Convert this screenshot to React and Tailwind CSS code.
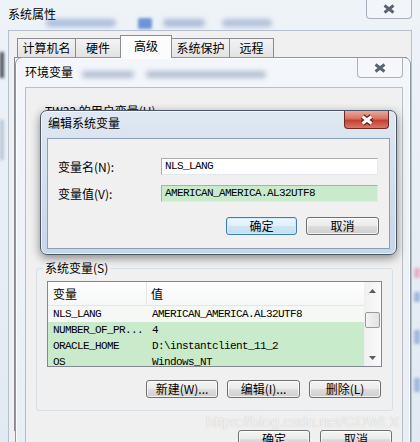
import React from "react";

const CJK = "font-['Noto_Sans_CJK_SC','Liberation_Sans',sans-serif]";
const MONO = "font-['Liberation_Mono','Noto_Sans_CJK_SC',monospace] text-[11px] tracking-[-0.6px]";

function XGlyph({ red }) {
  return (
    <svg width="16" height="12" viewBox="0 0 16 12">
      <path d="M3.5 2.5 L12.5 9.5 M12.5 2.5 L3.5 9.5" stroke={red ? "#6a1d16" : "#ffffff"} strokeWidth="5.4" strokeLinecap="butt" fill="none" />
      <path d="M3.5 2.5 L12.5 9.5 M12.5 2.5 L3.5 9.5" stroke={red ? "#ffffff" : "#5a6472"} strokeWidth="3" strokeLinecap="butt" fill="none" />
    </svg>
  );
}

function Btn({ children, className }) {
  return (
    <div
      className={
        "flex items-center justify-center h-[18px] rounded-[3px] border border-[#707070] bg-[linear-gradient(180deg,#f4f4f4_0%,#ebebeb_48%,#dddddd_52%,#cfcfcf_100%)] text-[12px] leading-[14px] text-black shadow-[inset_0_0_0_1px_rgba(255,255,255,0.7)] " +
        className
      }
    >
      {children}
    </div>
  );
}

function Tab({ children, className }) {
  return (
    <div
      className={
        "flex items-center justify-center border border-[#898c95] border-b-0 -ml-px text-[12px] leading-[14px] text-black " +
        className
      }
    >
      {children}
    </div>
  );
}

export default function App() {
  return (
    <div className={"relative w-[420px] h-[442px] overflow-hidden bg-[linear-gradient(180deg,#eef3f8,#e1e9f2)] " + CJK}>
      {/* blurred desktop behind glass */}
      <div className="absolute left-[46px] top-[19px] w-[70px] h-[8px] rounded-full bg-[#9db2d6] blur-[2.5px] opacity-80"></div>
      <div className="absolute left-[138px] top-[18px] w-[14px] h-[11px] rounded-[2px] bg-[#6f93d6] blur-[1.5px]"></div>
      <div className="absolute left-[163px] top-[19px] w-[42px] h-[8px] rounded-full bg-[#9aaed0] blur-[2.5px] opacity-80"></div>
      <div className="absolute left-[222px] top-[19px] w-[50px] h-[8px] rounded-full bg-[#a4b5d2] blur-[2.5px] opacity-80"></div>
      <div className="absolute left-0 top-[52px] w-[4px] h-[26px] bg-[#4d525b] blur-[1.5px]"></div>
      <div className="absolute left-0 top-[120px] w-[4px] h-[40px] bg-[#b9c7d8] blur-[1.5px]"></div>
      <div className="absolute left-[414px] top-[268px] w-[6px] h-[10px] bg-[#e7b1c3] blur-[1.5px]"></div>
      <div className="absolute left-[414px] top-[292px] w-[6px] h-[10px] bg-[#9fb8df] blur-[1.5px]"></div>
      <div className="absolute left-[414px] top-[330px] w-[6px] h-[14px] bg-[#9fb8df] blur-[1.5px]"></div>
      <div className="absolute left-[414px] top-[378px] w-[6px] h-[14px] bg-[#9fb8df] blur-[1.5px]"></div>

      {/* outer window title */}
      <div className="absolute left-[8px] top-[6px] text-[12px] leading-[16px] text-black">系统属性</div>
      <div className="absolute left-[366px] top-0 w-[46px] h-[19px] flex items-center justify-center rounded-b-[4px] border border-t-0 border-[#a7b0bb] bg-[#f4f7fa]/70">
        <XGlyph />
      </div>

      {/* outer client area */}
      <div className="absolute left-[8px] top-[30px] w-[404px] h-[420px] bg-[#f0f0f0] border border-[#b4c0cd] flex flex-col">
        <div className="flex items-end h-[26px] pl-[9px]">
          <Tab className="w-[59px] h-[19px] bg-[linear-gradient(180deg,#f3f3f3,#e3e3e3)]">计算机名</Tab>
          <Tab className="w-[46px] h-[19px] bg-[linear-gradient(180deg,#f3f3f3,#e3e3e3)]">硬件</Tab>
          <Tab className="relative z-10 w-[52px] h-[23px] -mb-px bg-[#fcfcfc] items-start pt-[3px]">高级</Tab>
          <Tab className="w-[59px] h-[19px] bg-[linear-gradient(180deg,#f3f3f3,#e3e3e3)]">系统保护</Tab>
          <Tab className="w-[45px] h-[19px] bg-[linear-gradient(180deg,#f3f3f3,#e3e3e3)]">远程</Tab>
        </div>
        <div className="ml-[5px] w-[393px] h-[374px] bg-[#fcfcfc] border border-[#898c95]"></div>
      </div>

      {/* 环境变量 window */}
      <div className="absolute left-[15px] top-[57px] w-[396px] h-[400px] rounded-t-[7px] border border-[#8a97a6] bg-[linear-gradient(180deg,#f3f6fa,#e8eef5)] shadow-[inset_0_0_0_1px_rgba(255,255,255,0.8)] flex flex-col">
        <div className="relative flex items-start h-[29px]">
          <div className="absolute left-[66px] top-[13px] w-[52px] h-[7px] rounded-full bg-[#b3c0d2] blur-[2.5px]"></div>
          <div className="absolute left-[130px] top-[13px] w-[120px] h-[7px] rounded-full bg-[#b3c0d2] blur-[2.5px]"></div>
          <span className="relative pl-[9px] pt-[7px] text-[12px] leading-[14px] text-black">环境变量</span>
          <div className="relative ml-auto mr-[7px] w-[46px] h-[20px] flex items-center justify-center rounded-b-[4px] border border-t-0 border-[#a7b0bb] bg-[#f6f8fb]/70">
            <XGlyph />
          </div>
        </div>
        <div className="ml-[9px] w-[378px] flex-1 bg-[#f0f0f0] border border-[#b7bec7] flex flex-col">
          <div className="ml-[19px] mt-[16px] text-[12px] leading-[14px] text-black">TW32 的用户变量(U)</div>
          <div className="h-[143px]"></div>
          <fieldset className="ml-[10px] w-[357px] border border-[#d5dfe5] rounded-[3px] pb-[12px]">
            <legend className="ml-[6px] px-[2px] text-[12px] leading-[14px] text-black">系统变量(S)</legend>
            <div className="mt-[6px] ml-[10px] w-[335px] h-[86px] border border-[#828790] bg-white flex overflow-hidden">
              <div className="w-[316px] flex flex-col">
                <div className="flex h-[24px] shrink-0 bg-[linear-gradient(180deg,#ffffff,#f6f7f8)] border-b border-[#e5e5e5] text-[12px] leading-[14px]">
                  <div className="w-[99px] pl-[5px] flex items-center border-r border-[#e5e5e5]">变量</div>
                  <div className="pl-[4px] flex items-center">值</div>
                </div>
                <div className={"flex h-[16px] shrink-0 items-center bg-[#f5f8f5] " + MONO}>
                  <div className="w-[100px] pl-[5px]">NLS_LANG</div>
                  <div className="pl-[4px]">AMERICAN_AMERICA.AL32UTF8</div>
                </div>
                <div className={"flex h-[16px] shrink-0 items-center bg-[#c9ebcb] " + MONO}>
                  <div className="w-[100px] pl-[5px]">NUMBER_OF_PR...</div>
                  <div className="pl-[4px]">4</div>
                </div>
                <div className={"flex h-[16px] shrink-0 items-center bg-[#c9ebcb] " + MONO}>
                  <div className="w-[100px] pl-[5px]">ORACLE_HOME</div>
                  <div className="pl-[4px]">D:\instantclient_11_2</div>
                </div>
                <div className={"flex h-[16px] shrink-0 items-center bg-[#c9ebcb] " + MONO}>
                  <div className="w-[100px] pl-[5px]">OS</div>
                  <div className="pl-[4px]">Windows_NT</div>
                </div>
              </div>
              <div className="w-[17px] h-full bg-[linear-gradient(90deg,#f0f0f0,#fafafa)] flex flex-col items-center">
                <div className="h-[17px] flex items-center justify-center">
                  <svg width="7" height="4" viewBox="0 0 7 4"><path d="M3.5 0 L7 4 L0 4 Z" fill="#5b5b5b" /></svg>
                </div>
                <div className="mt-[13px] w-[15px] h-[16px] rounded-[2px] border border-[#9a9a9a] bg-[linear-gradient(90deg,#f4f4f4,#e2e2e2)]"></div>
                <div className="flex-1"></div>
                <div className="h-[17px] flex items-center justify-center">
                  <svg width="7" height="4" viewBox="0 0 7 4"><path d="M0 0 L7 0 L3.5 4 Z" fill="#5b5b5b" /></svg>
                </div>
              </div>
            </div>
            <div className="mt-[13px] flex justify-end gap-[9px] pr-[11px]">
              <Btn className="w-[72px]">新建(W)...</Btn>
              <Btn className="w-[73px]">编辑(I)...</Btn>
              <Btn className="w-[72px]">删除(L)</Btn>
            </div>
          </fieldset>
          <div className="mt-[19px] flex justify-end gap-[10px] pr-[10px]">
            <Btn className="w-[72px]">确定</Btn>
            <Btn className="w-[72px]">取消</Btn>
          </div>
        </div>
      </div>

      {/* 编辑系统变量 dialog */}
      <div className="absolute left-[40px] top-[110px] w-[357px] h-[145px] rounded-[7px] border border-[#4b5868] bg-[linear-gradient(180deg,#dfe8f2,#c6d7ea)] shadow-[0_3px_10px_rgba(0,0,0,0.45),inset_0_0_0_1px_rgba(255,255,255,0.6)] flex flex-col">
        <div className="flex items-start h-[27px]">
          <span className="pl-[7px] pt-[5px] text-[12px] leading-[14px] text-black">编辑系统变量</span>
          <div className="ml-auto mr-[7px] w-[45px] h-[18px] flex items-center justify-center rounded-b-[4px] border border-t-0 border-[#6d2a25] bg-[linear-gradient(180deg,#eaa99b_0%,#d87262_45%,#c43f2f_55%,#d9786a_100%)]">
            <XGlyph red />
          </div>
        </div>
        <div className="ml-[6px] w-[343px] h-[111px] bg-[#f0f0f0] border border-[#8a9fb6] flex flex-col pt-[19px]">
          <div className="flex items-center h-[17px]">
            <div className="pl-[10px] w-[113px] text-[12px] leading-[14px]">变量名(N):</div>
            <div className={"w-[217px] h-[17px] border border-[#abadb3] border-b-[#e3e9ef] border-r-[#e3e9ef] bg-white pl-[3px] flex items-center " + MONO}>NLS_LANG</div>
          </div>
          <div className="mt-[10px] flex items-center h-[17px]">
            <div className="pl-[10px] w-[113px] text-[12px] leading-[14px]">变量值(V):</div>
            <div className={"w-[217px] h-[17px] border border-[#abadb3] border-b-[#e3e9ef] border-r-[#e3e9ef] bg-[#c9ebcb] pl-[3px] flex items-center " + MONO}>AMERICAN_AMERICA.AL32UTF8</div>
          </div>
          <div className="mt-[15px] flex justify-end gap-[9px] pr-[10px]">
            <div className="flex items-center justify-center w-[71px] h-[18px] rounded-[3px] border border-[#3c7fb1] bg-[linear-gradient(180deg,#eef7fc_0%,#e2f0f9_48%,#cfe6f4_52%,#c2def0_100%)] shadow-[inset_0_0_0_1px_rgba(200,235,255,0.9)] text-[12px] leading-[14px]">确定</div>
            <Btn className="w-[73px]">取消</Btn>
          </div>
        </div>
      </div>

      {/* watermark */}
      <div className="absolute left-[206px] top-[413px] font-['Liberation_Sans',sans-serif] text-[15px] leading-[18px] text-white/80 [text-shadow:0_0_1px_rgba(120,120,120,0.5)]">
        https://blog.csdn.net/GDWLX
      </div>
    </div>
  );
}
